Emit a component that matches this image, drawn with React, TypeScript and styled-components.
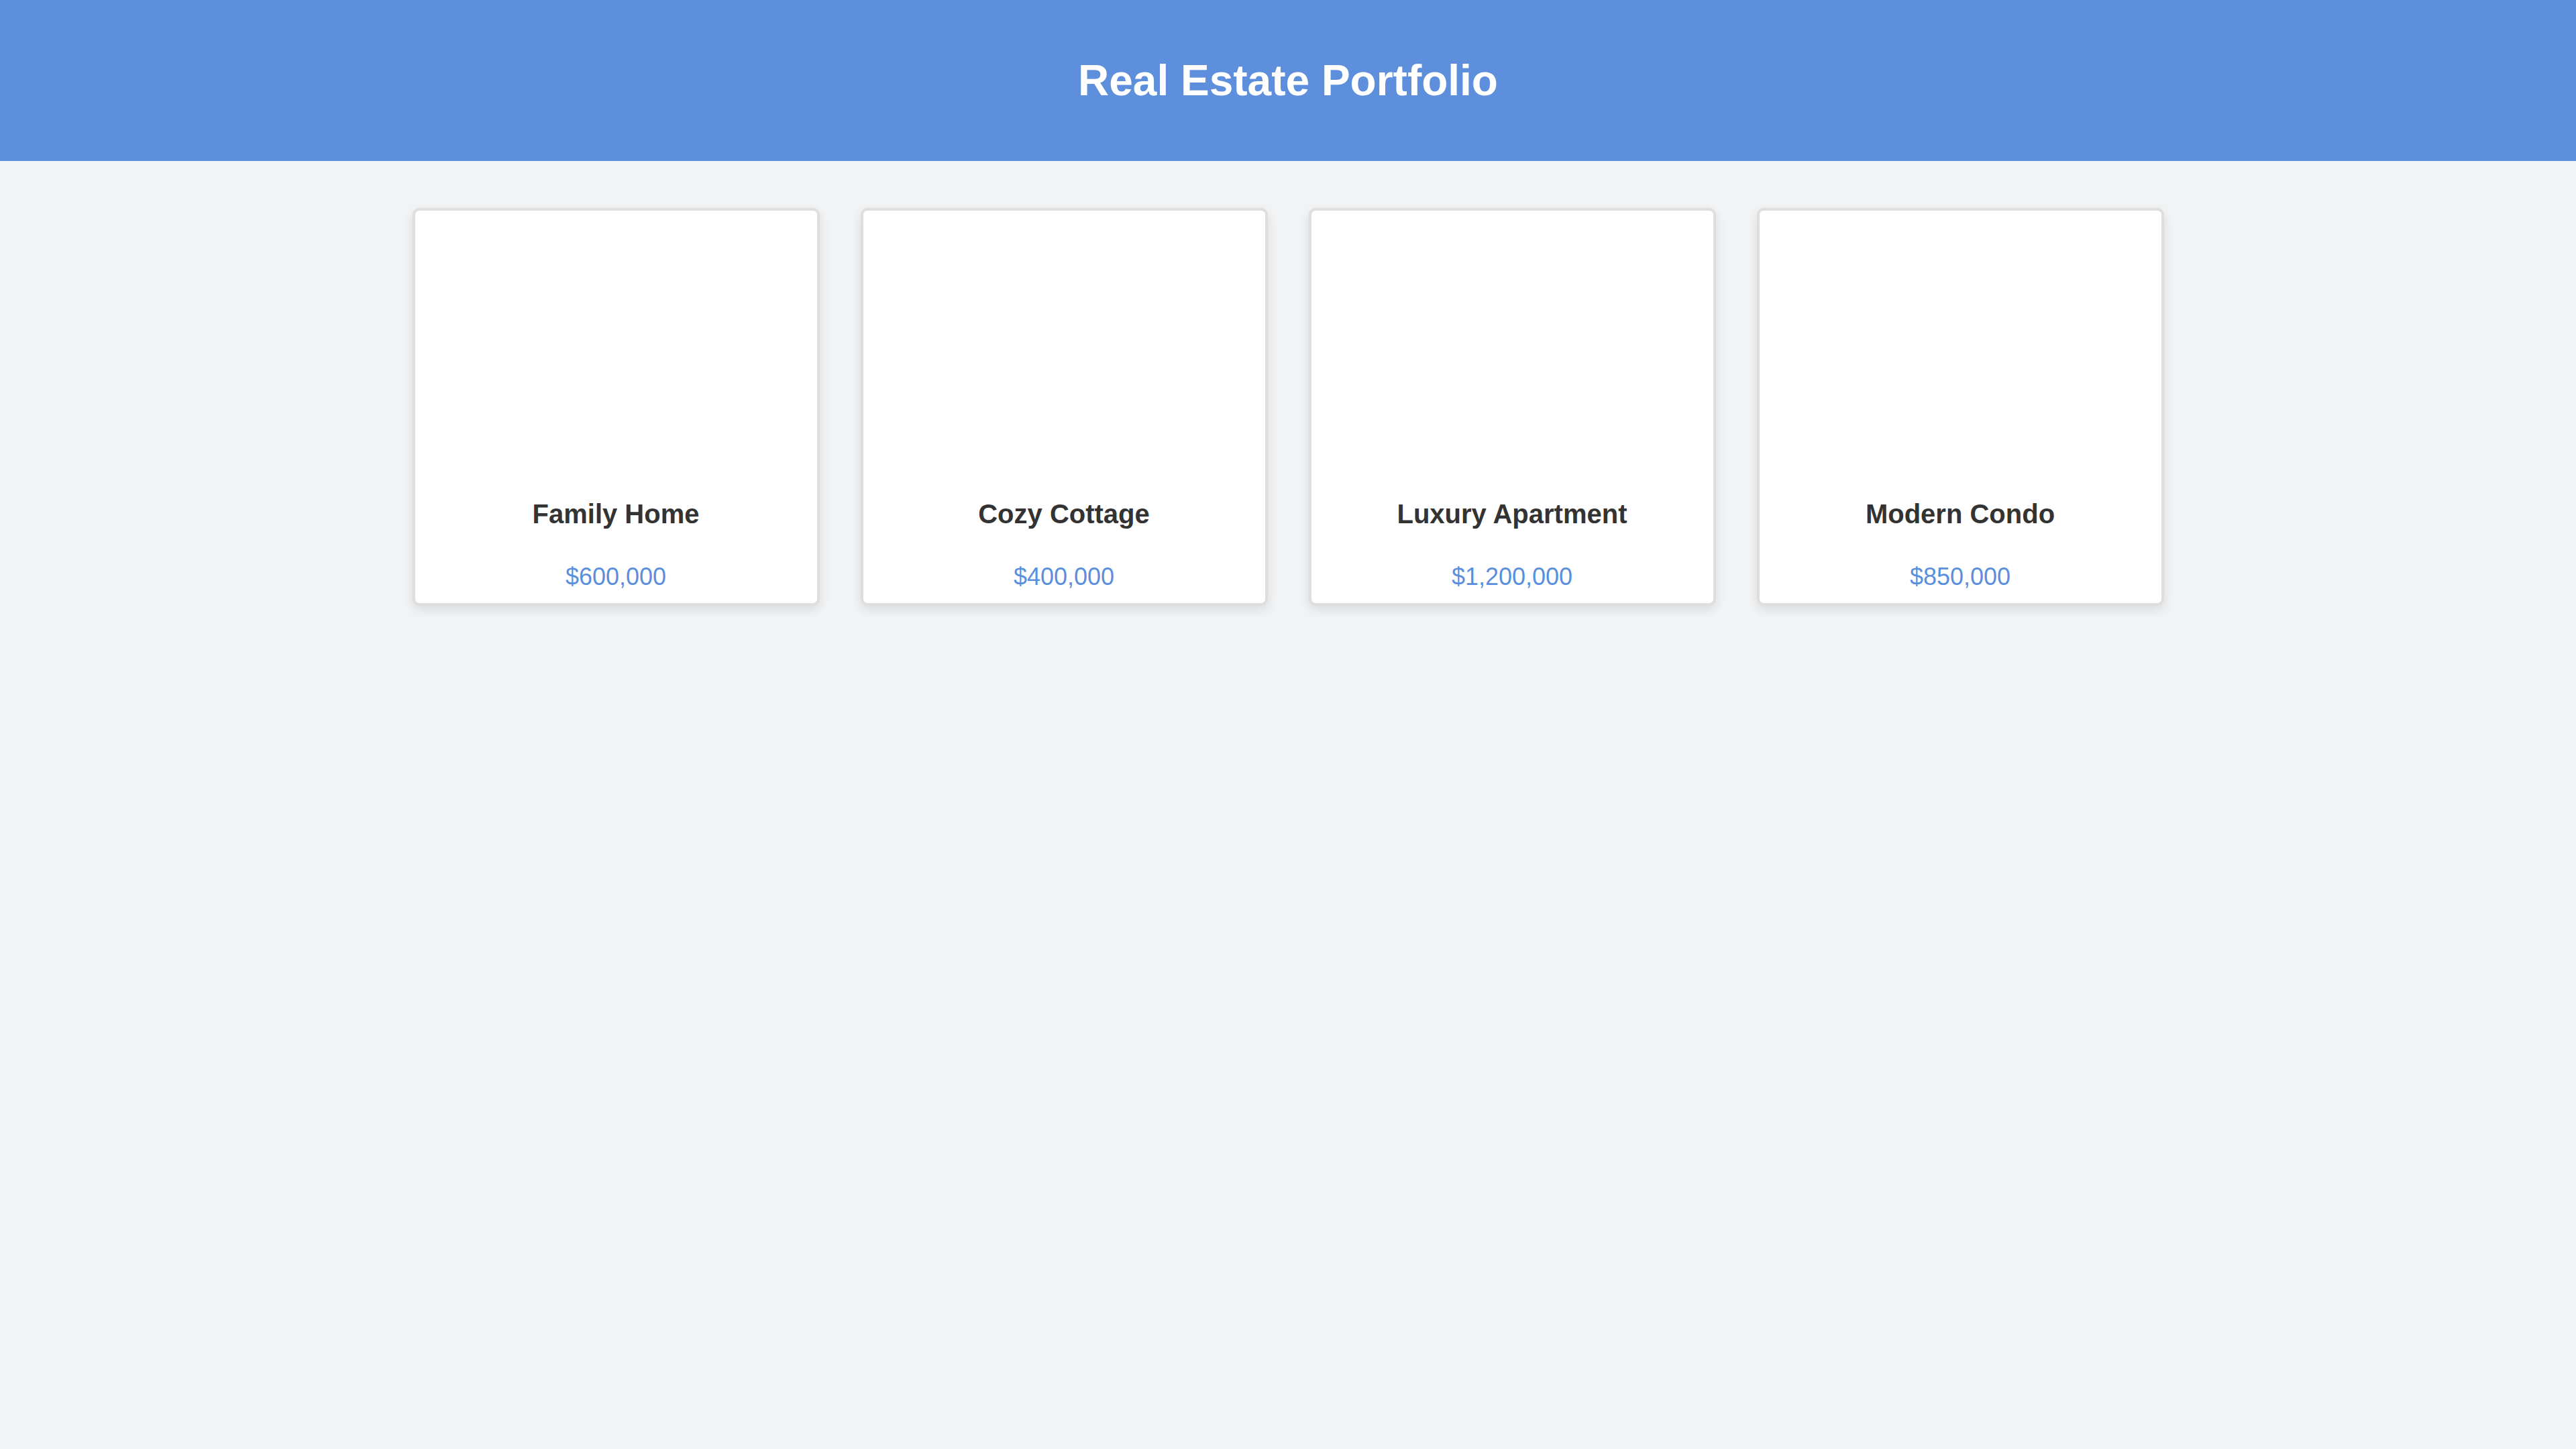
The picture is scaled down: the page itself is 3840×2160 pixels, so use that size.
import React from 'react';
import styled, { createGlobalStyle } from 'styled-components';

const properties = [
  { id: 1, title: 'Family Home', price: '$600,000' },
  { id: 2, title: 'Cozy Cottage', price: '$400,000' },
  { id: 3, title: 'Luxury Apartment', price: '$1,200,000' },
  { id: 4, title: 'Modern Condo', price: '$850,000' },
];

const App = () => {
  return (
    <>
      <GlobalStyle />
      <Header>
        <Title>Real Estate Portfolio</Title>
      </Header>
      <CardList>
        {properties.map((p) => (
          <Card key={p.id}>
            <ImageSpace />
            <CardTitle>{p.title}</CardTitle>
            <Price>{p.price}</Price>
          </Card>
        ))}
      </CardList>
    </>
  );
};

export default App;

const GlobalStyle = createGlobalStyle`
  body {
    margin: 0;
    background-color: #f2f3f5;
    font-family: 'Liberation Sans', Arial, sans-serif;
    min-height: 100vh;
  }
`;

const Header = styled.header`
  height: 240px;
  background-color: #5d8fdc;
  display: flex;
  align-items: center;
  justify-content: center;
`;

const Title = styled.h1`
  margin: 0;
  color: #ffffff;
  font-size: 64px;
  font-weight: 700;
  line-height: 74px;
`;

const CardList = styled.div`
  display: flex;
  justify-content: center;
  gap: 61px;
  padding-top: 70px;
`;

const Card = styled.div`
  box-sizing: border-box;
  width: 607px;
  display: flex;
  flex-direction: column;
  align-items: center;
  background-color: #ffffff;
  border: 4px solid #dedede;
  border-radius: 10px;
  box-shadow: 0 6px 16px rgba(0, 0, 0, 0.1);
`;

const ImageSpace = styled.div`
  width: 100%;
  height: 429px;
`;

const CardTitle = styled.h3`
  margin: 0;
  color: #333333;
  font-size: 40px;
  font-weight: 700;
  line-height: 46px;
`;

const Price = styled.p`
  margin: 50px 0 19px;
  color: #5b8fdd;
  font-size: 36px;
  line-height: 41px;
`;
